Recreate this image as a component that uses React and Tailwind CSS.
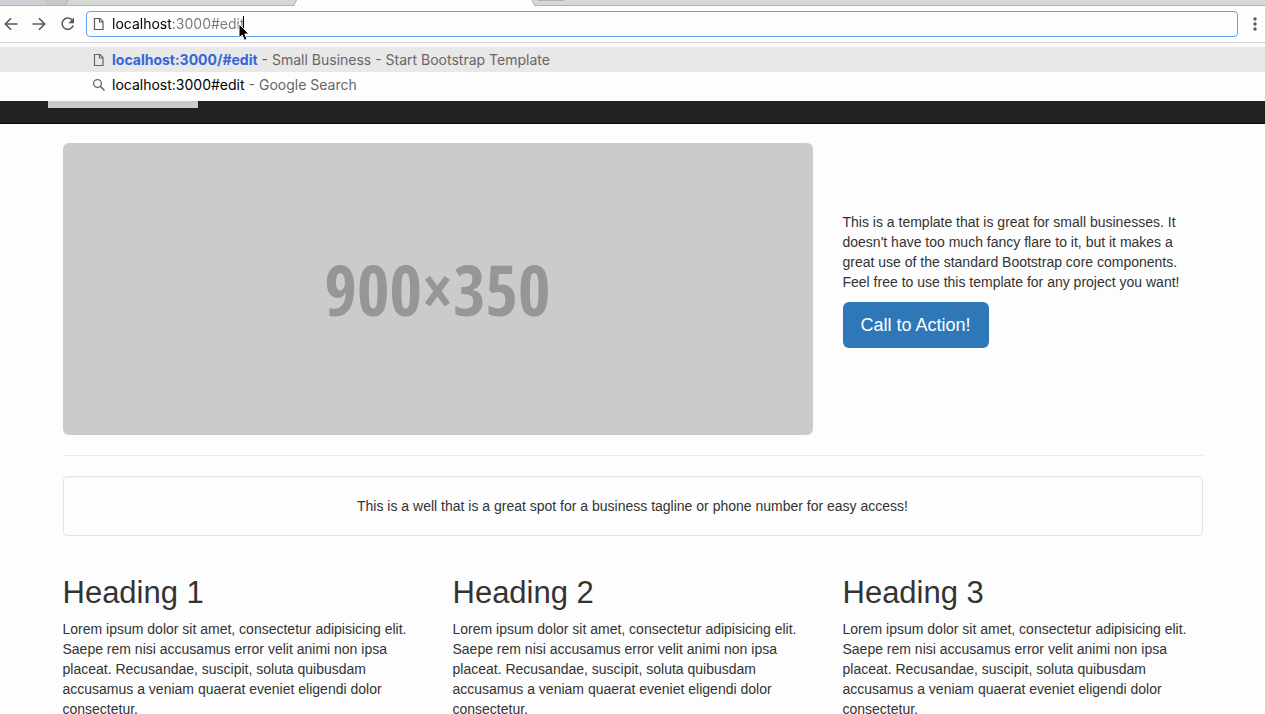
import React, { useState } from "react";

const lorem =
  "Lorem ipsum dolor sit amet, consectetur adipisicing elit. Saepe rem nisi accusamus error velit animi non ipsa placeat. Recusandae, suscipit, soluta quibusdam accusamus a veniam quaerat eveniet eligendi dolor consectetur.";

const headings = ["Heading 1", "Heading 2", "Heading 3"];

function PageIcon({ className }) {
  return (
    <svg viewBox="0 0 14 14" className={className} fill="none" stroke="currentColor" aria-hidden="true">
      <path d="M2.500 1.500h5.500l3 3v8H2.500z" strokeWidth="1.2" />
      <path d="M7.500 1.500v3.500H11" strokeWidth="1.2" />
    </svg>
  );
}

function SearchIcon({ className }) {
  return (
    <svg viewBox="0 0 14 14" className={className} fill="none" stroke="currentColor" aria-hidden="true">
      <circle cx="5.5" cy="5.5" r="3.9" strokeWidth="1.3" />
      <path d="M8.300 8.300 12.500 12.500" strokeWidth="1.600" />
    </svg>
  );
}

function TabStrip() {
  return (
    <svg className="block h-[6px] w-full bg-[#d6d8d7]" aria-hidden="true">
      <rect width="45" height="6" fill="#cdd0d5" />
      <rect x="45" width="22" height="6" fill="#c9c9c9" />
      <path d="M65 6 68 0H297L294 6z" fill="#d6d8d7" />
      <path d="M65 6 68 0" stroke="#a9a9a9" />
      <rect y="5" width="100%" height="1" fill="#b2b2b2" />
      <path d="M293.500 6 296.500 0H532L535 6z" fill="#fdfdfd" />
      <path d="M293.500 6 296.500 0M532 0l3 6" fill="none" stroke="#a9a9a9" />
      <rect x="538" width="26" height="1" fill="#b2b2b2" />
    </svg>
  );
}

function Toolbar() {
  const [url, setUrl] = useState("localhost:3000#edit");
  return (
    <div className="flex h-[37px] items-center border-b border-[#d4d4d4] bg-[#fdfdfd] pr-px text-[#5a5a5a]">
      <div className="flex w-[86px] shrink-0 items-center gap-3 pl-1">
        <button type="button" aria-label="Back" className="size-4">
          <svg viewBox="0 0 16 16" fill="none" stroke="currentColor" strokeWidth="1.6">
            <path d="M13.500 8H1.500M7 2.300 1.300 8 7 13.700" />
          </svg>
        </button>
        <button type="button" aria-label="Forward" className="size-4">
          <svg viewBox="0 0 16 16" fill="none" stroke="currentColor" strokeWidth="1.6">
            <path d="M.5 8H12.500M7 2.300 12.700 8 7 13.700" />
          </svg>
        </button>
        <button type="button" aria-label="Reload" className="size-4">
          <svg viewBox="0 0 16 16" fill="none">
            <path d="M12.300 4.100A5.700 5.700 0 1 0 13.200 9.600" stroke="currentColor" strokeWidth="1.6" />
            <path d="M14 1.500v5.700H8.300z" fill="currentColor" />
          </svg>
        </button>
      </div>
      <div className="relative flex h-[26px] grow items-center rounded border border-[#5ba2ee] bg-[#fdfdfd] pl-[5px]">
        <PageIcon className="size-3.5 shrink-0" />
        <input
          type="text"
          aria-label="Address"
          value={url}
          onChange={(e) => setUrl(e.target.value)}
          className="ml-1.5 h-5 min-w-0 grow bg-[linear-gradient(to_right,#000_59px,#777_59px)] bg-clip-text text-sm text-transparent caret-black outline-none"
        />
        <span className="absolute top-1 left-[156px] h-4 w-px bg-black" aria-hidden="true" />
        <svg
          viewBox="0 0 12 19"
          className="absolute top-[11px] left-[151px] z-20 h-[19px] w-3"
          aria-hidden="true"
        >
          <path
            d="M1 1v14l3.200-3 2.200 5.300 2.600-1.100-2.200-5.200H11z"
            fill="#000"
            stroke="#fff"
          />
        </svg>
      </div>
      <button type="button" aria-label="Menu" className="ml-2.5 size-4 shrink-0">
        <svg viewBox="0 0 16 16" fill="currentColor">
          <circle cx="7" cy="3" r="1.700" />
          <circle cx="7" cy="8" r="1.700" />
          <circle cx="7" cy="13" r="1.700" />
        </svg>
      </button>
    </div>
  );
}

function Suggestions() {
  return (
    <div className="absolute inset-x-0 top-full z-10 bg-[#fdfdfd] py-1 text-sm text-[#666]">
      <a href="#edit" className="flex h-[25px] items-center bg-[#e8e8e8] pl-[92px]">
        <PageIcon className="mr-1.5 size-3.5" />
        <b className="font-bold text-[#3367d6]">localhost:3000/#edit</b>
        <span className="ml-1">- Small Business - Start Bootstrap Template</span>
      </a>
      <a href="#search" className="flex h-[25px] items-center pl-[92px]">
        <SearchIcon className="mr-1.5 size-3.5" />
        <span className="text-black">localhost:3000#edit</span>
        <span className="ml-1">- Google Search</span>
      </a>
    </div>
  );
}

export default function App() {
  return (
    <div className="h-screen overflow-hidden bg-[#fdfdfd] font-['Liberation_Sans',Arial,sans-serif] text-sm text-[#333]">
      <header className="relative font-[Inter,sans-serif]">
        <TabStrip />
        <Toolbar />
        <Suggestions />
      </header>

      <nav className="h-[81px] border-b border-[#080808] bg-[#222] px-12 pt-[15px]">
        <a href="#home" aria-label="Home" className="block h-[50px] w-[150px] bg-[#ccc]" />
      </nav>

      <main className="mx-auto max-w-[1140px] pt-[19px]">
        <section className="grid grid-cols-12 gap-[30px]">
          <div className="col-span-8 flex aspect-[900/350] items-center justify-center rounded-md bg-[#cbcbcb] font-['Noto_Sans_ExtraCondensed','Open_Sans_Condensed','Roboto_Condensed',sans-serif] text-[70px] leading-none font-medium text-[#969696]">
            900×350
          </div>
          <div className="col-span-4 pt-[69px]">
            <p>
              This is a template that is great for small businesses. It doesn't have too much fancy
              flare to it, but it makes a great use of the standard Bootstrap core components. Feel
              free to use this template for any project you want!
            </p>
            <a
              href="#action"
              className="mt-2.5 inline-flex h-[46px] items-center rounded-md bg-[#2e78b7] px-[18px] text-lg text-white"
            >
              Call to Action!
            </a>
          </div>
        </section>

        <hr className="my-5 border-[#eaeaea]" />

        <div className="rounded border border-[#e5e5e5] p-[19px] text-center shadow-[inset_0_1px_1px_rgba(0,0,0,0.05)]">
          This is a well that is a great spot for a business tagline or phone number for easy access!
        </div>

        <section className="mt-10 grid grid-cols-3 gap-[30px]">
          {headings.map((title) => (
            <article key={title}>
              <h2 className="mb-2.5 text-[31px] leading-[33px] font-medium">{title}</h2>
              <p>{lorem}</p>
            </article>
          ))}
        </section>
      </main>
    </div>
  );
}
